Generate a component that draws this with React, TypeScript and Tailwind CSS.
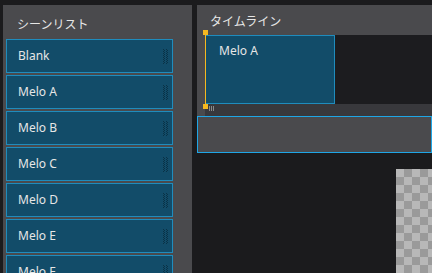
const scenes = ["Blank", "Melo A", "Melo B", "Melo C", "Melo D", "Melo E", "Melo F"];

const font = { fontFamily: '"Noto Sans", "Noto Sans CJK JP", sans-serif' };

function Grip() {
  // two dotted columns at the right end of a scene card
  return (
    <svg width="6" height="15" className="shrink-0">
      {[0, 1, 2, 3, 4, 5, 6, 7].map((i) => (
        <g key={i} fill="#0a3246">
          <rect x="0" y={i * 2} width="1" height="1" />
          <rect x="3" y={i * 2} width="1" height="1" />
          <rect x="1" y={i * 2 + 1} width="1" height="1" />
          <rect x="4" y={i * 2 + 1} width="1" height="1" />
        </g>
      ))}
    </svg>
  );
}

export default function App() {
  return (
    <div className="w-[432px] h-[273px] overflow-hidden bg-[#1b1b1d] pt-[5px] flex flex-col text-[#e6e6e6]" style={font}>
      <div className="flex flex-1 gap-[5px] pl-[3px] min-h-0">
        {/* シーンリスト */}
        <div className="w-[189px] bg-[#4a4a4d] pl-[3px] flex flex-col">
          <div className="pt-[12px] pl-[11px] h-[28px] mb-[6px] text-[12px] leading-[16px]">シーンリスト</div>
          <div className="flex flex-col gap-[2px]">
            {scenes.map((s) => (
              <div
                key={s}
                className="w-[167px] h-[34px] shrink-0 border border-[#1f8cbd] bg-[#124c69] flex items-center justify-between pl-[11px] pr-[3px] text-[12px]"
              >
                <span>{s}</span>
                <Grip />
              </div>
            ))}
          </div>
        </div>

        {/* タイムライン */}
        <div className="flex-1 flex flex-col">
          <div className="relative h-[111px] bg-[#4a4a4d] flex flex-col">
            <div className="pt-[9px] pl-[13px] h-[30px] text-[12px] leading-[16px]">タイムライン</div>
            <div className="flex h-[69px] pl-[8px]">
              <div className="flex-1 flex bg-[#1c1c1f]">
                <div className="w-[130px] h-full border border-[#1f8cbd] bg-[#124c69] pl-[13px] pt-[7px] text-[12px] leading-[16px]">
                  Melo A
                </div>
              </div>
            </div>
            <div className="ml-[8px] h-[12px] bg-[#38383c] flex gap-[1px] pl-[4px] pt-[2px]">
              <div className="w-[1px] h-[5px] bg-[#8a8a8a]" />
              <div className="w-[1px] h-[5px] bg-[#8a8a8a]" />
              <div className="w-[1px] h-[5px] bg-[#8a8a8a]" />
            </div>
            {/* playhead */}
            <div className="absolute left-[8px] top-[27px] w-[1px] h-[74px] bg-[#f5b820]" />
            <div className="absolute left-[6px] top-[25px] w-[5px] h-[5px] bg-[#f5b820]" />
            <div className="absolute left-[6px] top-[99px] w-[5px] h-[5px] bg-[#f5b820]" />
          </div>
          <div className="h-[37px] border border-[#1fa6e6] bg-[#4a4a4d]" />
          <div className="flex-1 flex justify-end pt-[16px]">
            <div className="w-[36px] h-full bg-[conic-gradient(#9a9a9a_25%,#b8b8b8_0_50%,#9a9a9a_0_75%,#b8b8b8_0)] bg-[length:16px_16px]" />
          </div>
        </div>
      </div>
    </div>
  );
}
